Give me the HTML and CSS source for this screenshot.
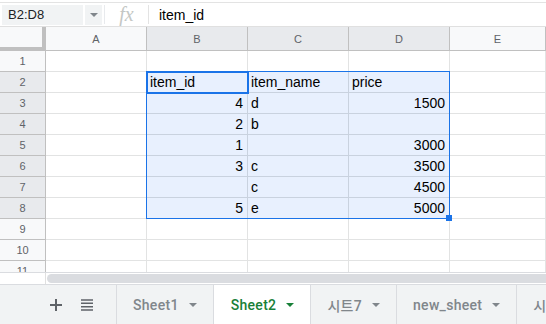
FILE: index.html
```html
<!DOCTYPE html>
<html lang="ko">
<head>
    <meta charset="UTF-8">
    <title>Sheet2</title>
    <link rel="stylesheet" href="styles.css">
</head>
<body>

<!-- Barra de fórmulas -->
<div class="formula-bar">
    <div class="name-box">B2:D8</div>
    <div class="name-drop"><span class="caret"></span></div>
    <div class="fx">fx</div>
    <div class="formula">item_id</div>
</div>

<!-- Hoja -->
<div class="sheet">
    <div class="grid">
        <div class="corner"></div>
        <div class="hd">A</div>
        <div class="hd on">B</div>
        <div class="hd on">C</div>
        <div class="hd on">D</div>
        <div class="hd">E</div>

        <div class="rh">1</div><div class="c"></div><div class="c"></div><div class="c"></div><div class="c"></div><div class="c"></div>
        <div class="rh on">2</div><div class="c"></div><div class="c s">item_id</div><div class="c s">item_name</div><div class="c s">price</div><div class="c"></div>
        <div class="rh on">3</div><div class="c"></div><div class="c s num">4</div><div class="c s">d</div><div class="c s num">1500</div><div class="c"></div>
        <div class="rh on">4</div><div class="c"></div><div class="c s num">2</div><div class="c s">b</div><div class="c s"></div><div class="c"></div>
        <div class="rh on">5</div><div class="c"></div><div class="c s num">1</div><div class="c s"></div><div class="c s num">3000</div><div class="c"></div>
        <div class="rh on">6</div><div class="c"></div><div class="c s num">3</div><div class="c s">c</div><div class="c s num">3500</div><div class="c"></div>
        <div class="rh on">7</div><div class="c"></div><div class="c s"></div><div class="c s">c</div><div class="c s num">4500</div><div class="c"></div>
        <div class="rh on">8</div><div class="c"></div><div class="c s num">5</div><div class="c s">e</div><div class="c s num">5000</div><div class="c"></div>
        <div class="rh">9</div><div class="c"></div><div class="c"></div><div class="c"></div><div class="c"></div><div class="c"></div>
        <div class="rh">10</div><div class="c"></div><div class="c"></div><div class="c"></div><div class="c"></div><div class="c"></div>
        <div class="rh">11</div><div class="c"></div><div class="c"></div><div class="c"></div><div class="c"></div><div class="c"></div>
    </div>

    <!-- Selección -->
    <div class="range"></div>
    <div class="active"></div>
    <div class="handle"></div>
</div>

<!-- Barra de desplazamiento -->
<div class="hscroll">
    <div class="hscroll-gap"></div>
    <div class="thumb"></div>
</div>

<!-- Pestañas -->
<div class="tabs">
    <div class="tab-tools">
        <svg width="12" height="12" viewBox="0 0 12 12"><path d="M6 0v12M0 6h12" stroke="#5f6368" stroke-width="2"/></svg>
        <svg width="12" height="12" viewBox="0 0 12 12"><path d="M0 1h12M0 4.3h12M0 7.7h12M0 11h12" stroke="#5f6368" stroke-width="1.6"/></svg>
    </div>
    <div class="tab">Sheet1 <span class="caret"></span></div>
    <div class="tab current">Sheet2 <span class="caret"></span></div>
    <div class="tab">시트7 <span class="caret"></span></div>
    <div class="tab">new_sheet <span class="caret"></span></div>
    <div class="tab">시트</div>
</div>

</body>
</html>
```

FILE: styles.css
```css
body {
    margin: 0;
    width: 546px;
    height: 324px;
    overflow: hidden;
    font-family: "Liberation Sans", Arial, sans-serif;
    background: #fff;
}

/* Barra de fórmulas */
.formula-bar {
    display: flex;
    align-items: center;
    margin-top: 2px;
    height: 23px;
    border-top: 1px solid #e3e3e3;
    border-bottom: 1px solid #e0e0e0;
}
.name-box {
    margin-left: 2px;
    width: 75px;
    height: 20px;
    padding-left: 6px;
    background: #f1f3f4;
    font-size: 13px;
    line-height: 20px;
    color: #202124;
}
.name-drop {
    display: flex;
    align-items: center;
    justify-content: center;
    margin-left: 2px;
    width: 17px;
    height: 20px;
    background: #f1f3f4;
}
.name-drop .caret {
    border-top-color: #80868b;
    margin: 0;
}
.fx {
    display: flex;
    align-items: center;
    justify-content: center;
    margin-left: 2px;
    width: 43px;
    height: 19px;
    border-left: 1px solid #e8eaed;
    border-right: 1px solid #e3e3e3;
    font-family: "Liberation Serif", serif;
    font-style: italic;
    font-size: 20px;
    color: #c4c7c5;
}
.formula {
    padding-left: 10px;
    font-size: 14px;
    color: #000;
}

/* Hoja */
.sheet {
    position: relative;
    height: 245px;
    overflow: hidden;
    border-bottom: 1px solid #dadce0;
}
.grid {
    display: grid;
    grid-template-columns: 46px 101px 101px 101px 101px 1fr;
    grid-template-rows: 24px repeat(11, 21px);
}
.grid > div {
    box-sizing: border-box;
}
.corner {
    background: #f8f9fa;
    border-right: 4px solid #c0c0c0;
    border-bottom: 4px solid #c0c0c0;
}
.hd {
    display: flex;
    align-items: center;
    justify-content: center;
    background: #f8f9fa;
    border-right: 1px solid #c0c0c0;
    border-bottom: 1px solid #c0c0c0;
    font-size: 11px;
    color: #5f6368;
}
.rh {
    display: flex;
    align-items: center;
    justify-content: center;
    background: #f8f9fa;
    border-right: 1px solid #c0c0c0;
    border-bottom: 1px solid #c0c0c0;
    font-size: 11px;
    color: #5f6368;
}
.hd.on, .rh.on {
    background: #e8eaed;
}
.c {
    display: flex;
    align-items: flex-end;
    padding: 0 3px 2px;
    border-right: 1px solid #e2e3e3;
    border-bottom: 1px solid #e2e3e3;
    font-size: 14px;
    line-height: 16px;
    color: #000;
    white-space: nowrap;
}
.c.s {
    background: #e8f0fe;
    border-color: #c9d2df;
}
.c.num {
    justify-content: flex-end;
    padding-right: 4px;
}

/* Selección */
.range {
    position: absolute;
    left: 146px;
    top: 44px;
    width: 302px;
    height: 146px;
    border: 1px solid #1a73e8;
}
.active {
    position: absolute;
    left: 146px;
    top: 44px;
    width: 99px;
    height: 19px;
    border: 2px solid #1a73e8;
}
.handle {
    position: absolute;
    left: 446px;
    top: 188px;
    width: 6px;
    height: 6px;
    background: #1a73e8;
}

/* Barra de desplazamiento */
.hscroll {
    display: flex;
    align-items: center;
    height: 11px;
    background: #fff;
}
.hscroll-gap {
    width: 46px;
    height: 11px;
    box-sizing: border-box;
    border-right: 1px solid #e0e0e0;
}
.thumb {
    flex: 1;
    height: 9px;
    margin-left: 1px;
    border-radius: 5px 0 0 5px;
    background: #dadce0;
}

/* Pestañas */
.tabs {
    display: flex;
    height: 39px;
    border-top: 1px solid #dadce0;
    background: #f1f3f4;
    font-family: Roboto, "Noto Sans CJK KR", sans-serif;
    font-size: 14px;
    font-weight: 500;
    letter-spacing: 0.3px;
    color: #80868b;
}
.tabs > div {
    flex-shrink: 0;
    box-sizing: border-box;
}
.tab-tools {
    display: flex;
    align-items: center;
    gap: 19px;
    padding-left: 50px;
    width: 117px;
    border-right: 1px solid #dadce0;
}
.tab {
    display: flex;
    align-items: center;
    padding: 0 16px;
    border-right: 1px solid #dadce0;
    white-space: nowrap;
}
.tab .caret {
    margin-left: 10px;
}
.tab.current {
    background: #fff;
    color: #188038;
    padding: 0 16px 0 17px;
}
.tab.current .caret {
    border-top-color: #188038;
}
.caret {
    display: inline-block;
    width: 0;
    height: 0;
    border-left: 4px solid transparent;
    border-right: 4px solid transparent;
    border-top: 4px solid #80868b;
}
```
